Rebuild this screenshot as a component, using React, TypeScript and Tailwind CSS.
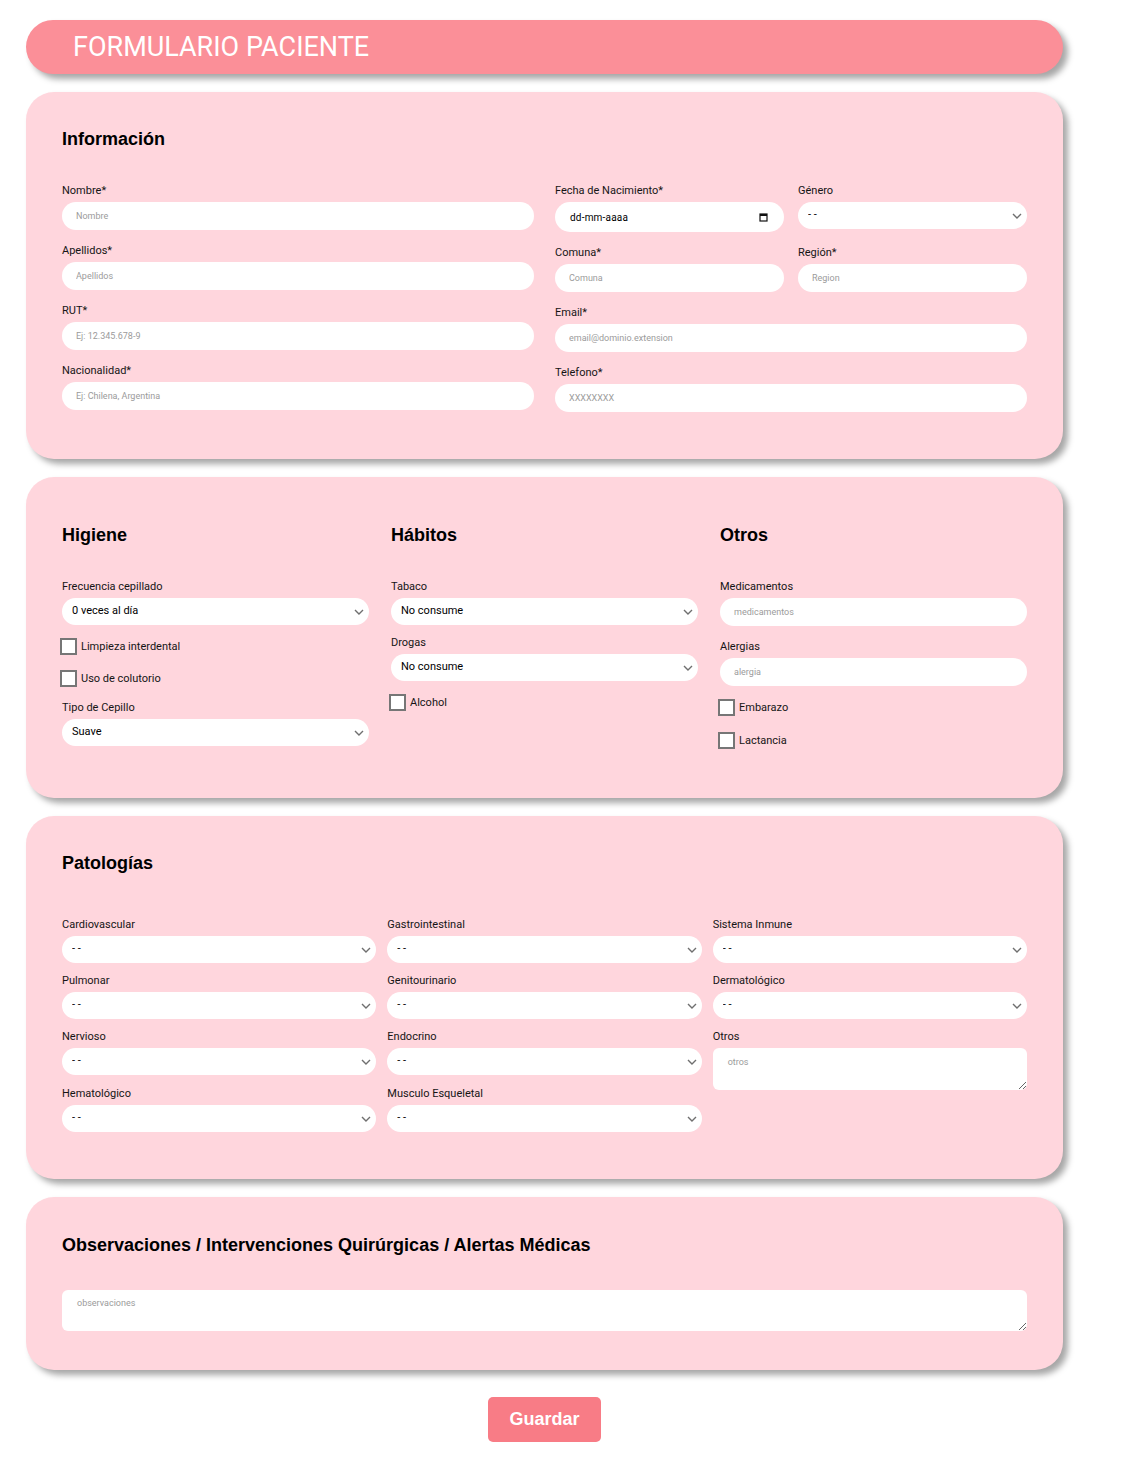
const labelCls = "block text-[11px] leading-[13px] text-[#151515] mb-[5px]";
const inputCls =
  "block w-full h-[28px] rounded-full bg-white px-[14px] text-[9px] text-black outline-none placeholder:text-[#9b9b9b]";
const selectCls =
  "block w-full h-[27px] appearance-none rounded-full bg-white pl-[10px] pr-[22px] text-[11px] text-black outline-none";
const headingCls =
  "font-['Liberation_Sans',Arial,sans-serif] font-bold text-[18px] leading-[22px] text-black";
const cardCls =
  "mt-[18px] rounded-[28px] bg-[#ffd6dd] px-[36px] shadow-[5px_5px_6px_rgba(0,0,0,0.35)]";

const Field = ({ label, placeholder }: { label: string; placeholder: string }) => (
  <div>
    <label className={labelCls}>{label}</label>
    <input className={inputCls} placeholder={placeholder} />
  </div>
);

const Chevron = () => (
  <svg
    className="absolute right-[5px] top-1/2 -translate-y-1/2 pointer-events-none"
    width="10"
    height="6"
    viewBox="0 0 10 6"
    fill="none"
  >
    <path d="M1 1l4 4 4-4" stroke="#6f6f6f" strokeWidth="1.4" />
  </svg>
);

const SelectField = ({
  label,
  value,
  className = "",
}: {
  label: string;
  value: string;
  className?: string;
}) => (
  <div className={className}>
    <label className={labelCls}>{label}</label>
    <div className="relative">
      <select className={selectCls} defaultValue={value}>
        <option value={value}>{value}</option>
      </select>
      <Chevron />
    </div>
  </div>
);

const Check = ({ label, className = "" }: { label: string; className?: string }) => (
  <label className={"flex items-center -ml-[2px] h-[17px] " + className}>
    <span className="w-[17px] h-[17px] border-2 border-[#767676] bg-white shrink-0" />
    <span className="ml-[4px] text-[11px] leading-[13px] text-[#151515]">{label}</span>
  </label>
);

const DateField = () => (
  <div>
    <label className={labelCls}>Fecha de Nacimiento*</label>
    <div className="h-[30px] rounded-full bg-white pl-[15px] pr-[16px] flex items-center justify-between">
      <span className="text-[10px] tracking-[0.2px] text-black">dd-mm-aaaa</span>
      <svg width="9" height="10" viewBox="0 0 9 10" fill="none">
        <rect x="1" y="2" width="7" height="7" stroke="#111" strokeWidth="1.2" />
        <rect x="1" y="2" width="7" height="2" fill="#111" />
      </svg>
    </div>
  </div>
);

export default function App() {
  return (
    <div className="min-h-[1470px] bg-white font-['Roboto',sans-serif]">
      <div className="ml-[26px] w-[1037px] pt-[20px] pb-[28px]">
        <div className="h-[54px] rounded-full bg-[#fb8f98] pl-[47px] flex items-center shadow-[5px_5px_6px_rgba(0,0,0,0.35)]">
          <h1 className="text-[27px] leading-[30px] text-white">FORMULARIO PACIENTE</h1>
        </div>

        {/* Información */}
        <section className={cardCls + " pt-[36px] pb-[47px]"}>
          <h2 className={headingCls}>Información</h2>
          <div className="mt-[34px] grid grid-cols-2 gap-x-[21px]">
            <div className="flex flex-col gap-[14px]">
              <Field label="Nombre*" placeholder="Nombre" />
              <Field label="Apellidos*" placeholder="Apellidos" />
              <Field label="RUT*" placeholder="Ej: 12.345.678-9" />
              <Field label="Nacionalidad*" placeholder="Ej: Chilena, Argentina" />
            </div>
            <div className="flex flex-col gap-[14px]">
              <div className="grid grid-cols-2 gap-x-[14px] items-start">
                <DateField />
                <SelectField label="Género" value="- -" />
              </div>
              <div className="grid grid-cols-2 gap-x-[14px]">
                <Field label="Comuna*" placeholder="Comuna" />
                <Field label="Región*" placeholder="Region" />
              </div>
              <Field label="Email*" placeholder="email@dominio.extension" />
              <Field label="Telefono*" placeholder="XXXXXXXX" />
            </div>
          </div>
        </section>

        {/* Higiene / Hábitos / Otros */}
        <section className={cardCls + " pt-[47px] pb-[49px]"}>
          <div className="grid grid-cols-3 gap-x-[22px]">
            <div>
              <h2 className={headingCls}>Higiene</h2>
              <SelectField className="mt-[34px]" label="Frecuencia cepillado" value="0 veces al día" />
              <Check className="mt-[13px]" label="Limpieza interdental" />
              <Check className="mt-[15px]" label="Uso de colutorio" />
              <SelectField className="mt-[14px]" label="Tipo de Cepillo" value="Suave" />
            </div>
            <div>
              <h2 className={headingCls}>Hábitos</h2>
              <SelectField className="mt-[34px]" label="Tabaco" value="No consume" />
              <SelectField className="mt-[11px]" label="Drogas" value="No consume" />
              <Check className="mt-[13px]" label="Alcohol" />
            </div>
            <div>
              <h2 className={headingCls}>Otros</h2>
              <div className="mt-[34px]">
                <Field label="Medicamentos" placeholder="medicamentos" />
              </div>
              <div className="mt-[14px]">
                <Field label="Alergias" placeholder="alergia" />
              </div>
              <Check className="mt-[13px]" label="Embarazo" />
              <Check className="mt-[16px]" label="Lactancia" />
            </div>
          </div>
        </section>

        {/* Patologías */}
        <section className={cardCls + " pt-[36px] pb-[47px]"}>
          <h2 className={headingCls}>Patologías</h2>
          <div className="mt-[44px] grid grid-cols-3 gap-x-[11px]">
            <div className="flex flex-col gap-[11px]">
              <SelectField label="Cardiovascular" value="- -" />
              <SelectField label="Pulmonar" value="- -" />
              <SelectField label="Nervioso" value="- -" />
              <SelectField className="mt-[1px]" label="Hematológico" value="- -" />
            </div>
            <div className="flex flex-col gap-[11px]">
              <SelectField label="Gastrointestinal" value="- -" />
              <SelectField label="Genitourinario" value="- -" />
              <SelectField label="Endocrino" value="- -" />
              <SelectField className="mt-[1px]" label="Musculo Esqueletal" value="- -" />
            </div>
            <div className="flex flex-col gap-[11px]">
              <SelectField label="Sistema Inmune" value="- -" />
              <SelectField label="Dermatológico" value="- -" />
              <div>
                <label className={labelCls}>Otros</label>
                <textarea
                  className="block w-full h-[42px] rounded-[6px] bg-white px-[15px] pt-[8px] text-[9px] outline-none placeholder:text-[#9b9b9b]"
                  placeholder="otros"
                />
              </div>
            </div>
          </div>
        </section>

        {/* Observaciones */}
        <section className={cardCls + " pt-[37px] pb-[39px]"}>
          <h2 className={headingCls}>Observaciones / Intervenciones Quirúrgicas / Alertas Médicas</h2>
          <textarea
            className="mt-[34px] block w-full h-[41px] rounded-[6px] bg-white px-[15px] pt-[7px] text-[9px] outline-none placeholder:text-[#9b9b9b]"
            placeholder="observaciones"
          />
        </section>

        <div className="mt-[27px] flex justify-center">
          <button className="w-[113px] h-[45px] rounded-[5px] bg-[#f87c86] text-white font-['Liberation_Sans',Arial,sans-serif] font-bold text-[18px]">
            Guardar
          </button>
        </div>
      </div>
    </div>
  );
}
